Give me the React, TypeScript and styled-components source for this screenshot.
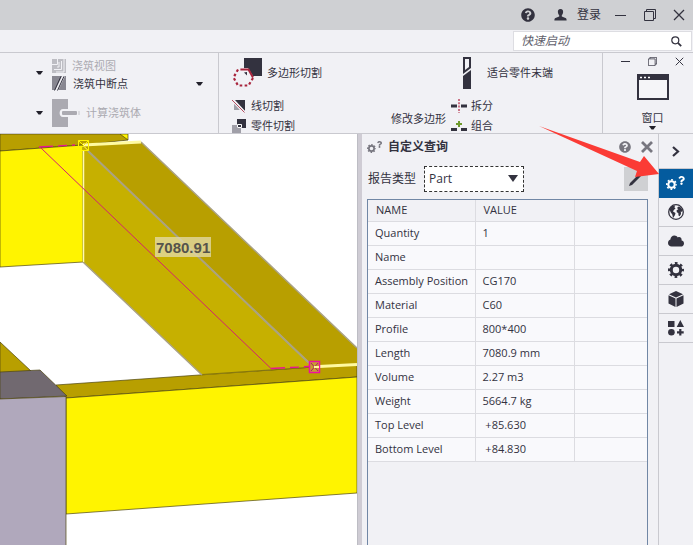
import React from "react";
import styled, { createGlobalStyle, css } from "styled-components";
import { FaCloud, FaQuestion, FaQuestionCircle } from "react-icons/fa";

const ink = "#33323f";
const line = "#c9c9cf";
const surface = "#f1f1f5";

const GlobalStyle = createGlobalStyle`
  * { box-sizing: border-box; }
  body {
    margin: 0;
    background: ${surface};
    color: ${ink};
    font-family: "Open Sans", "Noto Sans CJK SC", sans-serif;
    font-size: 11px;
    line-height: 16px;
  }
  button, input, select { font: inherit; color: inherit; }
  svg { display: block; flex-shrink: 0; }
`;

const Page = styled.div`
  display: flex;
  flex-direction: column;
  min-height: 100vh;
`;

const BareButton = styled.button`
  display: flex;
  align-items: center;
  padding: 0;
  border: 0;
  background: none;
  white-space: nowrap;
  cursor: pointer;
`;

const TitleBar = styled.header`
  display: flex;
  align-items: center;
  justify-content: flex-end;
  height: 30px;
  background: #cfd0d3;
`;

const LoginButton = styled(BareButton)`
  gap: 10px;
  margin: 0 5px 0 19px;
  font-size: 12px;
`;

const WindowButton = styled(BareButton)<{ $small?: boolean }>`
  justify-content: center;
  width: ${(p) => (p.$small ? 27 : 29)}px;
  height: ${(p) => (p.$small ? 16 : 30)}px;
`;

const SearchStrip = styled.div`
  display: flex;
  justify-content: flex-end;
  height: 23px;
  padding: 1px 1px 1px 0;
  border-bottom: 1px solid ${line};
`;

const SearchBox = styled.label`
  display: flex;
  align-items: center;
  width: 179px;
  padding: 0 9px 0 7px;
  border: 1px solid #dddde2;
  background: #fff;
`;

const SearchInput = styled.input`
  flex: 1;
  min-width: 0;
  padding: 0;
  border: 0;
  outline: 0;
  background: none;
  font-size: 12px;
  font-style: italic;
  &::placeholder { color: #62616c; opacity: 1; }
`;

const Ribbon = styled.nav`
  display: grid;
  grid-template-columns: 219fr 384fr 90px;
  border-bottom: 1px solid ${line};
`;

const PourGroup = styled.section`
  display: grid;
  grid-template-columns: 52px 1fr;
  grid-template-rows: 17px 19px 34px;
  align-content: start;
  padding: 4px 15px 4px 0;
  border-right: 1px solid ${line};
`;

const PourArrow = styled(BareButton)<{ $last?: boolean }>`
  grid-column: 1;
  grid-row: ${(p) => (p.$last ? "3" : "1 / span 2")};
  justify-content: flex-end;
  padding: 0 9px 4px 0;
  ${(p) => p.$last && css`padding: 6px 9px 0 0;`}
`;

const PourRow = styled.div<{ $spaced?: boolean }>`
  grid-column: 2;
  display: flex;
  align-items: center;
  justify-content: space-between;
  padding-top: ${(p) => (p.$spaced ? 6 : 0)}px;
`;

const Command = styled(BareButton)<{ $tall?: boolean; $gap?: number }>`
  gap: ${(p) => p.$gap ?? 6}px;
  height: ${(p) => (p.$tall ? 31 : 14)}px;
  &:disabled { color: #abaab1; cursor: default; }
`;

const FitCommand = styled(Command)`
  margin-left: 12px;
`;

const EditGroup = styled.section`
  display: flex;
  padding: 4px 49px 0 13px;
  border-right: 1px solid ${line};
`;

const CommandColumn = styled.div`
  display: flex;
  flex-direction: column;
  gap: 6px;
  > :first-child { margin-bottom: 5px; }
`;

const PolygonCommand = styled(BareButton)`
  align-self: flex-end;
  height: 28px;
  margin: 0 5px 0 auto;
`;

const WindowGroup = styled.section`
  display: flex;
  flex-direction: column;
  align-items: flex-end;
`;

const MdiButtons = styled.div`
  display: flex;
`;

const WindowMenu = styled(BareButton)`
  flex-direction: column;
  width: 81px;
  padding-top: 5px;
  span { margin-top: 10px; }
`;

const Workspace = styled.main`
  flex: 1;
  display: grid;
  grid-template-columns: minmax(0, 357fr) 5px minmax(0, 296fr) 35px;
`;

const ModelView = styled.svg`
  width: 100%;
  height: 100%;
  background: #fff;
`;

const Splitter = styled.div`
  border-left: 1px solid #bdbdc4;
  background: #cfccd4;
`;

const InquiryPanel = styled.aside`
  position: relative;
  display: flex;
  flex-direction: column;
  padding: 0 10px 0 5px;
`;

const PanelHeader = styled.div`
  display: flex;
  align-items: center;
  gap: 5px;
  height: 25px;
  color: #77767f;
`;

const PanelTitle = styled.h2`
  flex: 1;
  margin: 0;
  color: ${ink};
  font-size: 12px;
  font-weight: 600;
`;

const HeaderButtons = styled.div`
  display: flex;
  gap: 10px;
  margin-right: -5px;
`;

const ReportRow = styled.div`
  display: flex;
  align-items: center;
  height: 40px;
  font-size: 12px;
`;

const ReportLabel = styled.label`
  width: 57px;
  padding-left: 1px;
`;

const SelectWrap = styled.div`
  position: relative;
  width: 100px;
  svg { position: absolute; right: 6px; top: 9px; pointer-events: none; }
`;

const ReportSelect = styled.select`
  display: block;
  width: 100%;
  height: 26px;
  padding: 0 20px 0 4px;
  appearance: none;
  border: 1px dashed #333;
  border-radius: 0;
  outline: 0;
  background: #fff;
  line-height: 22px;
`;

const EditButton = styled(BareButton)`
  justify-content: center;
  width: 24px;
  height: 24px;
  margin-left: auto;
  background: #cfd0d3;
`;

const TableFrame = styled.div`
  flex: 1;
  border: 1px solid #7187a5;
  border-bottom: 0;
`;

const Table = styled.table`
  width: 100%;
  table-layout: fixed;
  border-collapse: collapse;
  th, td {
    height: 24px;
    padding: 0 7px;
    border: solid #dcdce1;
    border-width: 0 1px 1px 0;
    background: #f9f9fc;
    text-align: left;
    font-weight: 400;
    white-space: pre;
  }
  th:last-child, td:last-child { border-right: 0; }
  thead th { height: 21px; padding: 0 8px; background: ${surface}; }
`;

const NameCol = styled.col`width: 107px;`;
const ValueCol = styled.col`width: 99px;`;

const SideBar = styled.nav`
  display: flex;
  flex-direction: column;
  border-left: 1px solid ${line};
`;

const SideButton = styled(BareButton)<{ $active?: boolean; $tall?: boolean }>`
  justify-content: center;
  height: ${(p) => (p.$tall ? 35 : 29)}px;
  border-bottom: 1px solid ${line};
  ${(p) => p.$active && css`background: #045b9e; border-color: #045b9e; color: #fff;`}
`;

const Pointer = styled.svg`
  position: absolute;
  z-index: 1;
  top: -8px;
  right: -1px;
  pointer-events: none;
`;

const GearHelp = styled.span`
  display: flex;
  align-items: flex-end;
  svg + svg { margin-bottom: 5px; }
`;

const Caret = () => (
  <svg width="7" height="4"><path d="M0 0H7L4.5 3.5H2.5Z" fill="#22212b" /></svg>
);

const Minimise = ({ size = 11 }: { size?: number }) => (
  <svg width={size} height="11"><path d={`M0 5.5H${size}`} stroke={ink} /></svg>
);

const Restore = ({ size = 12 }: { size?: number }) => (
  <svg width={size} height={size} viewBox="0 0 12 12" fill="none" stroke={ink}>
    <path d="M.5 2.5H9.5V11.5H.5ZM2.5 2.5V.5H11.5V9.5H9.5" />
  </svg>
);

const Cross = ({ size = 12, weight = 1.3 }: { size?: number; weight?: number }) => (
  <svg width={size} height={size} viewBox="0 0 12 12" stroke="currentColor" strokeWidth={weight}>
    <path d="M1 1L11 11M11 1L1 11" />
  </svg>
);

const Person = () => (
  <svg width="13" height="12" viewBox="0 0 13 12" fill={ink}>
    <path d="M6.5 0C8.6 0 9.3 1.4 9.1 3.2C9 4.8 8.2 5.7 7.8 6.2V7.4L11.5 8.9C12.4 9.3 12.6 10 12.6 11.5H.4C.4 10 .6 9.3 1.5 8.9L5.2 7.4V6.2C4.8 5.7 4 4.8 3.9 3.2C3.7 1.4 4.4 0 6.5 0Z" />
  </svg>
);

const Magnifier = () => (
  <svg width="11" height="11" viewBox="0 0 11 11" fill="none" stroke={ink}>
    <circle cx="4.3" cy="4.3" r="3.5" strokeWidth="1.2" />
    <path d="M6.9 6.9L10.2 10.2" strokeWidth="1.8" />
  </svg>
);

const PourViewIcon = () => (
  <svg width="14" height="14" viewBox="0 0 14 14">
    <path d="M0 0H14V14H0Z" fill="#bdbdc3" />
    <path d="M0 5.500H5.500V0M2 10.500H9.500V2M5 8H7V3M12 0V13H4" fill="none" stroke="#f1f1f5" />
  </svg>
);

const PourBreakIcon = () => (
  <svg width="15" height="15" viewBox="0 0 15 15">
    <path d="M0 0H14V14H0Z" fill="#888791" />
    <path d="M3 14.5L10 0H13L6 15Z" fill="#eeeef2" />
    <path d="M2.5 14.5L9 .3M5.5 14.5L12 .3" stroke={ink} />
  </svg>
);

const PourBodyIcon = () => (
  <svg width="28" height="28" viewBox="0 0 28 28">
    <path d="M0 0H16V10H11C6.500 10 6.500 18 11 18H16V28H0Z" fill="#abaab1" />
    <rect x="10" y="12" width="15" height="4" rx="1" fill="#abaab1" />
    <path d="M27 12V16" stroke="#c6c6cb" />
  </svg>
);

const PolygonCutIcon = () => (
  <svg width="30" height="30" viewBox="0 0 30 30">
    <path d="M12 0H30V18H21L16 10H12Z" fill={ink} />
    <path d="M12 14.500L15 17.500V14Z" fill={ink} />
    <path d="M10 11.500H16.500L21 19.500" fill="none" stroke="#a8243c" strokeWidth="2" />
    <path d="M21 20L16.500 27.500H6L1.500 19.500L6 11.500H10" fill="none" stroke="#a8243c" strokeWidth="2.200" strokeDasharray="2.600 2.400" />
  </svg>
);

const LineCutIcon = () => (
  <svg width="14" height="13" viewBox="0 0 14 13">
    <path d="M3 0H13V11Z" fill={ink} />
    <path d="M2 3V10H8Z" fill="#a09fa8" />
    <path d="M0 0L12.500 12.500" stroke="#f1f1f5" strokeWidth="2.500" />
    <path d="M0 0L12.500 12.500" stroke="#b64d60" />
  </svg>
);

const PartCutIcon = () => (
  <svg width="14" height="14" viewBox="0 0 14 14">
    <path d="M0 6H9V14H0Z" fill="#a09fa8" />
    <path d="M5 0H14V9H5Z" fill={ink} />
    <path d="M5.500 5.500H9.500V8.500H5.500Z" fill={ink} stroke="#fff" />
  </svg>
);

const FitEndIcon = () => (
  <svg width="8" height="32" viewBox="0 0 8 32" fill={ink}>
    <path d="M0 0H8V11L0 17ZM2 2V13L6 10V2Z" fillRule="evenodd" />
    <path d="M8 13V32H0V19Z" />
  </svg>
);

const SplitIcon = () => (
  <svg width="16" height="14" viewBox="0 0 16 14">
    <path d="M0 7H6M10 7H16" stroke={ink} strokeWidth="3" />
    <path d="M8 0V14" stroke="#bd4a62" strokeWidth="1.500" strokeDasharray="2 1.300" />
  </svg>
);

const CombineIcon = () => (
  <svg width="16" height="12" viewBox="0 0 16 12">
    <path d="M0 9.500H6M10 9.500H16" stroke={ink} strokeWidth="3" />
    <path d="M8 1V7M5 4H11" stroke="#6e9a2d" strokeWidth="2" />
  </svg>
);

const WindowIcon = () => (
  <svg width="32" height="26" viewBox="0 0 32 26">
    <path d="M1 1H31V25H1Z" fill="#f5f5f8" stroke={ink} strokeWidth="2" />
    <path d="M0 0H32V6H0Z" fill={ink} />
    <path d="M3 3.500H5M7 3.500H9M11 3.500H13" stroke="#fff" strokeWidth="1.500" />
  </svg>
);

const Gear = ({ size }: { size: number }) => (
  <svg width={size} height={size} viewBox="0 0 16 16" fill="none" stroke="currentColor">
    <circle cx="8" cy="8" r="4.700" strokeWidth="3" />
    <circle cx="8" cy="8" r="6.800" strokeWidth="2.400" strokeDasharray="2.670 2.670" strokeDashoffset="1.335" />
  </svg>
);

const GlobeIcon = () => (
  <svg width="16" height="16" viewBox="0 0 16 16">
    <circle cx="8" cy="8" r="7.300" fill="#f5f5f8" stroke={ink} strokeWidth="1.300" />
    <path d="M1.500 5L4 2L7 1.500L6.500 3.500L7.500 4.500L5.800 6L5 7.500L7.500 9L7 11L5.800 13L5 14L4.300 10.500L2.500 8Z" fill={ink} />
    <path d="M9 4L10.500 2.500L13 3.500L14.700 6.500L13.800 8L12.800 7.200L13 10L11.700 12.300L10.500 11.500L10.300 9L8.800 8.200L8.600 6.300L10.300 5.200Z" fill={ink} />
  </svg>
);

const CubeIcon = () => (
  <svg width="16" height="16" viewBox="0 0 16 16" fill={ink}>
    <path d="M8 0L15 3.200L8 6.600L1 3.200ZM.5 4.200L7.500 7.500V16L.5 12.400ZM15.500 4.200L8.500 7.500V16L15.500 12.400Z" />
  </svg>
);

const ShapesIcon = () => (
  <svg width="16" height="16" viewBox="0 0 16 16" fill={ink}>
    <path d="M0 1H6.500V7H0ZM12.300 0L16 7H8.700Z" />
    <circle cx="3.400" cy="12.300" r="3.300" />
    <path d="M11.200 9H13.400V11.200H15.700V13.400H13.400V15.600H11.200V13.400H9V11.200H11.200Z" />
  </svg>
);

const Chevron = () => (
  <svg width="8" height="11" viewBox="0 0 8 11" fill="none" stroke={ink} strokeWidth="2.200">
    <path d="M1 1L6 5.500L1 10" />
  </svg>
);

const Pencil = () => (
  <svg width="14" height="14" viewBox="0 0 14 14" fill={ink}>
    <path d="M0 14L1 11L10 2L12 4L3 13ZM11 1L12 0L14 2L13 3Z" />
  </svg>
);

const GearQuestion = ({ gear, mark }: { gear: number; mark: number }) => (
  <GearHelp>
    <Gear size={gear} />
    <FaQuestion size={mark} />
  </GearHelp>
);

const Model = () => (
  <ModelView viewBox="0 134 357 411" preserveAspectRatio="xMinYMin slice" role="img" aria-label="3D">
    <g stroke="#4d4510" strokeWidth=".7">
      <path d="M0 134H122L128 140L83 145L0 151Z" fill="#b89f00" />
      <path d="M120 134H128V140Z" fill="#fff400" />
      <path d="M0 151L83 145V262L0 267Z" fill="#fff400" />
      <path d="M56 385L357 364V377L66 398Z" fill="#b89f00" />
      <path d="M66 398L357 377V493L66 514Z" fill="#fff400" />
      <path d="M0 342L31 371L0 374Z" fill="#b89f00" />
      <path d="M0 372L40 370L67 396L0 399Z" fill="#716970" />
      <path d="M-1 399L66 396.500V546H-1Z" fill="#b0a8bc" />
    </g>
    <path d="M83 146L141 142L357 348V365L314 367Z" fill="#b89f00" />
    <path d="M83 146L314 367L202 375L83 262Z" fill="#c6b000" />
    <path d="M202 374.500L314 367L357 364" fill="none" stroke="#6b5f10" strokeWidth=".7" />
    <g fill="none" stroke="#aaa284">
      <path d="M141 142L357 348M83 262L202 375" strokeWidth="1.500" />
      <path d="M88 151L309 363" strokeWidth="2" />
    </g>
    <path d="M83.500 150V262" stroke="#fff9b0" strokeWidth="1.500" />
    <path d="M83 145L141 142M319 366.500L357 364.500" stroke="#fffaa0" strokeWidth="3" />
    <path d="M41 148L271 368.500" stroke="#d4226f" fill="none" />
    <path d="M39 147L75 145M271 368.500L309 366.500" stroke="#e81493" strokeWidth="1.300" strokeDasharray="14 5 9 5" />
    <path d="M78.500 140.500H88.500V150.500H78.500ZL88.500 150.500M88.500 140.500L78.500 150.500" fill="none" stroke="#fff400" />
    <path d="M309.500 361.500H319.500V372.500H309.500Z" fill="#c6a030" stroke="#ef0fa0" strokeWidth="1.500" />
    <path d="M311 363L318 371M318 363L311 371" stroke="#b0146e" />
    <path d="M314 367H319" stroke="#fffaa0" strokeWidth="2" />
    <rect x="155" y="237" width="56" height="20" fill="#e4dcae" fillOpacity=".75" />
    <text x="156" y="253" fill="#55534b" fontFamily="Liberation Sans, sans-serif" fontSize="15" fontWeight="700">7080.91</text>
  </ModelView>
);

const rows: [string, string][] = [
  ["Quantity", "1"],
  ["Name", ""],
  ["Assembly Position", "CG170"],
  ["Material", "C60"],
  ["Profile", "800*400"],
  ["Length", "7080.9 mm"],
  ["Volume", "2.27 m3"],
  ["Weight", "5664.7 kg"],
  ["Top Level", " +85.630"],
  ["Bottom Level", " +84.830"],
];

export default function App() {
  return (
    <Page>
      <GlobalStyle />
      <TitleBar>
        <BareButton aria-label="帮助"><FaQuestionCircle size={14} /></BareButton>
        <LoginButton><Person />登录</LoginButton>
        <WindowButton aria-label="最小化"><Minimise /></WindowButton>
        <WindowButton aria-label="还原"><Restore /></WindowButton>
        <WindowButton aria-label="关闭"><Cross /></WindowButton>
      </TitleBar>
      <SearchStrip>
        <SearchBox>
          <SearchInput type="text" placeholder="快速启动" aria-label="快速启动" />
          <Magnifier />
        </SearchBox>
      </SearchStrip>

      <Ribbon>
        <PourGroup>
          <PourArrow aria-label="浇筑视图"><Caret /></PourArrow>
          <PourRow><Command disabled><PourViewIcon />浇筑视图</Command></PourRow>
          <PourRow>
            <Command><PourBreakIcon />浇筑中断点</Command>
            <BareButton aria-label="浇筑中断点"><Caret /></BareButton>
          </PourRow>
          <PourArrow $last aria-label="计算浇筑体"><Caret /></PourArrow>
          <PourRow $spaced><Command $tall disabled><PourBodyIcon />计算浇筑体</Command></PourRow>
        </PourGroup>
        <EditGroup>
          <CommandColumn>
            <Command $tall $gap={5}><PolygonCutIcon />多边形切割</Command>
            <Command $gap={5}><LineCutIcon />线切割</Command>
            <Command $gap={5}><PartCutIcon />零件切割</Command>
          </CommandColumn>
          <PolygonCommand>修改多边形</PolygonCommand>
          <CommandColumn>
            <FitCommand $tall $gap={16}><FitEndIcon />适合零件末端</FitCommand>
            <Command $gap={4}><SplitIcon />拆分</Command>
            <Command $gap={4}><CombineIcon />组合</Command>
          </CommandColumn>
        </EditGroup>
        <WindowGroup>
          <MdiButtons>
            <WindowButton $small aria-label="最小化窗口"><Minimise size={9} /></WindowButton>
            <WindowButton $small aria-label="还原窗口"><Restore size={9} /></WindowButton>
            <WindowButton $small aria-label="关闭窗口"><Cross size={9} /></WindowButton>
          </MdiButtons>
          <WindowMenu><WindowIcon /><span>窗口</span><Caret /></WindowMenu>
        </WindowGroup>
      </Ribbon>

      <Workspace>
        <Model />
        <Splitter />
        <InquiryPanel>
          <PanelHeader>
            <GearQuestion gear={9} mark={7} />
            <PanelTitle>自定义查询</PanelTitle>
            <HeaderButtons>
              <BareButton aria-label="帮助"><FaQuestionCircle size={12} /></BareButton>
              <BareButton aria-label="关闭面板"><Cross weight={2.8} /></BareButton>
            </HeaderButtons>
          </PanelHeader>
          <ReportRow>
            <ReportLabel htmlFor="report-type">报告类型</ReportLabel>
            <SelectWrap>
              <ReportSelect id="report-type" defaultValue="Part">
                <option>Part</option>
              </ReportSelect>
              <svg width="10" height="7"><path d="M0 0H10L5 7Z" fill={ink} /></svg>
            </SelectWrap>
            <EditButton aria-label="编辑"><Pencil /></EditButton>
          </ReportRow>
          <TableFrame>
            <Table>
              <colgroup><NameCol /><ValueCol /><col /></colgroup>
              <thead>
                <tr><th scope="col">NAME</th><th scope="col">VALUE</th><th /></tr>
              </thead>
              <tbody>
                {rows.map(([name, value]) => (
                  <tr key={name}><td>{name}</td><td>{value}</td><td /></tr>
                ))}
              </tbody>
            </Table>
          </TableFrame>
          <Pointer width="121" height="60" viewBox="0 0 121 60">
            <path d="M1 0L102 36L106 30L121 48L97 51L99 45Z" fill="#fb3b35" />
          </Pointer>
        </InquiryPanel>
        <SideBar>
          <SideButton $tall aria-label="收起"><Chevron /></SideButton>
          <SideButton $active aria-label="自定义查询"><GearQuestion gear={11} mark={9} /></SideButton>
          <SideButton aria-label="在线"><GlobeIcon /></SideButton>
          <SideButton aria-label="云"><FaCloud size={16} /></SideButton>
          <SideButton aria-label="设置"><Gear size={16} /></SideButton>
          <SideButton aria-label="模型"><CubeIcon /></SideButton>
          <SideButton aria-label="组件"><ShapesIcon /></SideButton>
        </SideBar>
      </Workspace>
    </Page>
  );
}
